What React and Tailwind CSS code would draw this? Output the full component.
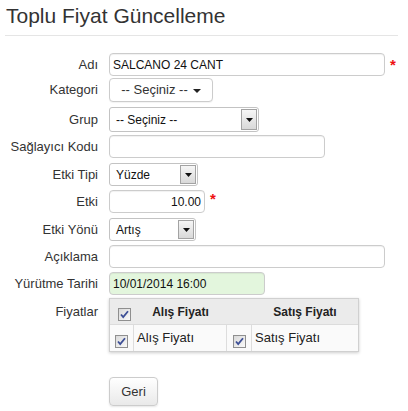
import React from 'react';

const Label = ({ children }) => (
  <div className="w-[93px] shrink-0 text-right text-[13px] leading-[16px] text-[#333]">{children}</div>
);

const Star = ({ top }) => (
  <span className={`-ml-[6px] self-start text-[15px] font-bold leading-none text-[#ee1111] ${top}`}>*</span>
);

const Select = ({ value, width, height }) => (
  <div className={`flex ${width} ${height} overflow-hidden rounded-[3px] border border-[#c3c3c3] bg-white`}>
    <div className="flex flex-1 items-center pl-[6px] text-[12px] text-[#111]">{value}</div>
    <div className="m-[1px] flex w-[16px] items-center justify-center border border-[#a3a3a3] bg-gradient-to-b from-[#f6f6f6] to-[#d9d9d9]">
      <svg width="7" height="4" viewBox="0 0 7 4">
        <path d="M0 0h7L3.5 4z" fill="#111" />
      </svg>
    </div>
  </div>
);

const Input = ({ value = '', width, extra = '' }) => (
  <div
    className={`flex h-[23px] ${width} items-center rounded-[4px] border border-[#cccccc] px-[3px] text-[12px] text-[#111] shadow-[inset_0_1px_1px_rgba(0,0,0,0.06)] ${extra}`}
  >
    {value}
  </div>
);

const Check = () => (
  <svg width="13" height="13" viewBox="0 0 13 13" className="shrink-0">
    <defs>
      <linearGradient id="cb" x1="0" y1="0" x2="1" y2="1">
        <stop offset="0" stopColor="#d8d8d8" />
        <stop offset="1" stopColor="#fbfbfb" />
      </linearGradient>
    </defs>
    <rect x="0.5" y="0.5" width="12" height="12" fill="url(#cb)" stroke="#8f8f8f" />
    <path d="M3 6.5l2.2 2.6L10 3.2" fill="none" stroke="#3d4f96" strokeWidth="1.8" />
  </svg>
);

export default function App() {
  return (
    <div className="min-h-[411px] w-[408px] bg-white px-[5px] font-['Liberation_Sans',Arial,sans-serif]">
      <h3 className="mt-[5px] pl-[1px] text-[21px] leading-[22px] text-[#333]">Toplu Fiyat Güncelleme</h3>
      <div className="mr-[5px] mt-[8px] border-t border-[#e5e5e5]" />

      <div className="mt-[17px] flex items-center gap-[11px]">
        <Label>Adı</Label>
        <Input value="SALCANO 24 CANT" width="w-[276px]" />
        <Star top="mt-[4px]" />
      </div>

      <div className="mt-[2px] flex items-center gap-[11px]">
        <Label>Kategori</Label>
        <div className="flex h-[24px] w-[104px] items-center justify-center rounded-[4px] border border-[#cccccc] bg-white text-[13px] text-[#333] shadow-[0_1px_1px_rgba(0,0,0,0.05)]">
          <span>-- Seçiniz --</span>
          <svg width="8" height="4" viewBox="0 0 8 4" className="ml-[5px] mt-[2px]">
            <path d="M0 0h8L4 4z" fill="#222" />
          </svg>
        </div>
      </div>

      <div className="mt-[5px] flex items-center gap-[11px]">
        <Label>Grup</Label>
        <Select value="-- Seçiniz --" width="w-[150px]" height="h-[25px]" />
      </div>

      <div className="mt-[3px] flex items-center gap-[11px]">
        <Label>Sağlayıcı Kodu</Label>
        <Input width="w-[216px]" />
      </div>

      <div className="mt-[5px] flex items-center gap-[11px]">
        <Label>Etki Tipi</Label>
        <Select value="Yüzde" width="w-[89px]" height="h-[23px]" />
      </div>

      <div className="mt-[4px] flex items-center gap-[11px]">
        <Label>Etki</Label>
        <Input value="10.00" width="w-[96px]" extra="justify-end" />
        <Star top="mt-[1px]" />
      </div>

      <div className="mt-[5px] flex items-center gap-[11px]">
        <Label>Etki Yönü</Label>
        <Select value="Artış" width="w-[87px]" height="h-[23px]" />
      </div>

      <div className="mt-[4px] flex items-center gap-[11px]">
        <Label>Açıklama</Label>
        <Input width="w-[276px]" />
      </div>

      <div className="mt-[4px] flex items-center gap-[11px]">
        <Label>Yürütme Tarihi</Label>
        <Input value="10/01/2014 16:00" width="w-[156px]" extra="bg-[#e3f6dd]" />
      </div>

      <div className="mt-[3px] flex items-start gap-[11px]">
        <div className="flex h-[27px] items-center">
          <Label>Fiyatlar</Label>
        </div>
        <div className="w-[250px] border border-[#d0d0d0] text-[12px] text-[#222] shadow-[0_1px_3px_rgba(0,0,0,0.2)]">
          <div className="flex h-[26px] items-center border-b border-[#dcdcdc] bg-[#ebebeb] font-bold">
            <div className="flex w-[24px] justify-center pl-[5px] pt-[5px]">
              <Check />
            </div>
            <div className="w-[93px] text-center">Alış Fiyatı</div>
            <div className="w-[25px]" />
            <div className="flex-1 text-center">Satış Fiyatı</div>
          </div>
          <div className="flex h-[26px] items-stretch bg-[#fafafa] text-[13px]">
            <div className="flex w-[24px] items-center justify-center border-r border-[#dddddd] pt-[6px]">
              <Check />
            </div>
            <div className="flex w-[93px] items-center border-r border-[#dddddd] pl-[3px]">Alış Fiyatı</div>
            <div className="flex w-[25px] items-center justify-center border-r border-[#dddddd] pt-[6px]">
              <Check />
            </div>
            <div className="flex flex-1 items-center pl-[3px]">Satış Fiyatı</div>
          </div>
        </div>
      </div>

      <div className="mt-[25px] pl-[104px]">
        <button className="h-[29px] w-[49px] rounded-[4px] border border-[#cccccc] bg-gradient-to-b from-white to-[#e9e9e9] text-[13px] text-[#333] shadow-[0_1px_2px_rgba(0,0,0,0.1)]">
          Geri
        </button>
      </div>
    </div>
  );
}
